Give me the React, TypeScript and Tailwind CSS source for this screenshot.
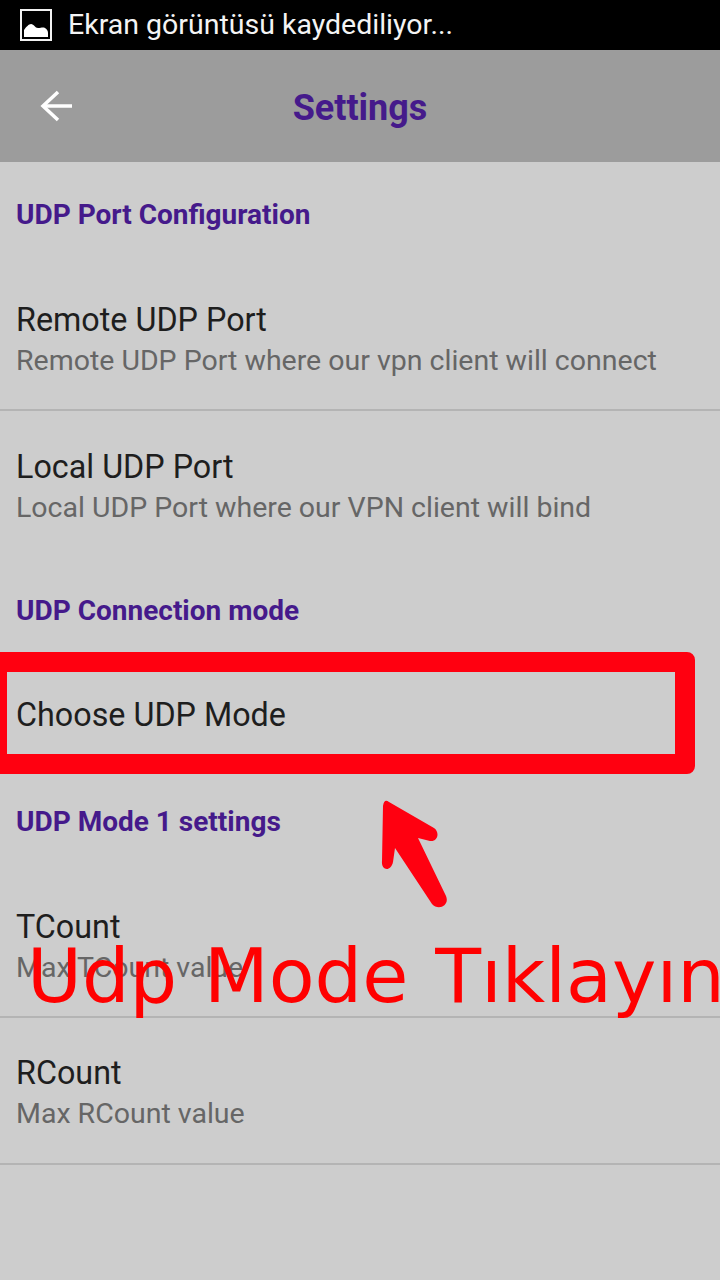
const roboto = { fontFamily: 'Roboto, "Liberation Sans", sans-serif' };

function Section({ title, h }: { title: string; h: string }) {
  return (
    <div className={`flex items-center px-4 pt-0.5 ${h}`}>
      <div className="text-[28px] leading-8 font-bold text-[#451a8b]">{title}</div>
    </div>
  );
}

function Row({ title, sub, h, line }: { title: string; sub?: string; h: string; line?: boolean }) {
  return (
    <div className={`flex flex-col justify-center px-4 ${line ? 'pt-1.5' : 'pt-0.5'} ${h} ${line ? 'border-b-2 border-[#b4b4b4]' : ''}`}>
      <div className="text-[32.3px] leading-10 text-[#1e1e1e]">{title}</div>
      {sub && <div className="mt-px text-[28.5px] leading-[40px] text-[#666666]">{sub}</div>}
    </div>
  );
}

export default function App() {
  return (
    <div className="relative h-[1280px] w-[720px] overflow-hidden bg-[#cdcdcd]" style={roboto}>
      <div className="flex h-[50px] items-center bg-black pl-5">
        <svg width="32" height="32" viewBox="0 0 32 32" className="shrink-0">
          <rect x="1" y="1" width="30" height="30" fill="none" stroke="#f2f2f2" strokeWidth="2" />
          <path d="M4 28V21C6 18 9 15 11 15C14 15 15 19 18 19C21 19 23 18 25 19C27 20 28 22 28 24V28Z" fill="#ffffff" />
        </svg>
        <div className="ml-4 text-[28.5px] leading-8 text-[#f4f4f4]">Ekran görüntüsü kaydediliyor...</div>
      </div>
      <div className="relative flex h-[112px] items-center justify-center bg-[#9c9c9c]">
        <svg width="34" height="32" viewBox="0 0 34 32" className="absolute left-[40px] top-[40px]" fill="none" stroke="#ffffff" strokeWidth="3.5">
          <path d="M32 16H3" />
          <path d="M18 2L3 16L18 30" />
        </svg>
        <div className="pt-1 text-[36px] leading-10 font-bold text-[#451a8b]">Settings</div>
      </div>

      <Section title="UDP Port Configuration" h="h-[104px]" />
      <Row title="Remote UDP Port" sub="Remote UDP Port where our vpn client will connect" h="h-[145px]" line />
      <Row title="Local UDP Port" sub="Local UDP Port where our VPN client will bind" h="h-[150px]" />
      <Section title="UDP Connection mode" h="h-[98px]" />
      <Row title="Choose UDP Mode" h="h-[110px]" />
      <Section title="UDP Mode 1 settings" h="h-[104px]" />
      <Row title="TCount" sub="Max TCount value" h="h-[145px]" line />
      <Row title="RCount" sub="Max RCount value" h="h-[147px]" line />

      <div className="absolute left-[-13px] top-[652px] h-[122px] w-[708px] rounded-lg border-[20px] border-[#ff0010]" />
      <svg width="72" height="112" viewBox="0 0 72 112" className="absolute left-[378px] top-[798px]" fill="#ff0010">
        <path d="M11 4L56 30C62 34 60 44 52 43L40 40L68 98C72 108 60 113 54 106L17 50L15 64C13 74 3 73 4 63L5 8C6 2 8 2 11 4Z" />
      </svg>
      <div
        className="absolute left-[27px] top-[930px] whitespace-nowrap text-[75px] leading-[92px] [word-spacing:3px] text-[#ff0000]"
        style={{ fontFamily: '"DejaVu Sans", sans-serif' }}
      >
        Udp Mode Tıklayın
      </div>
    </div>
  );
}
